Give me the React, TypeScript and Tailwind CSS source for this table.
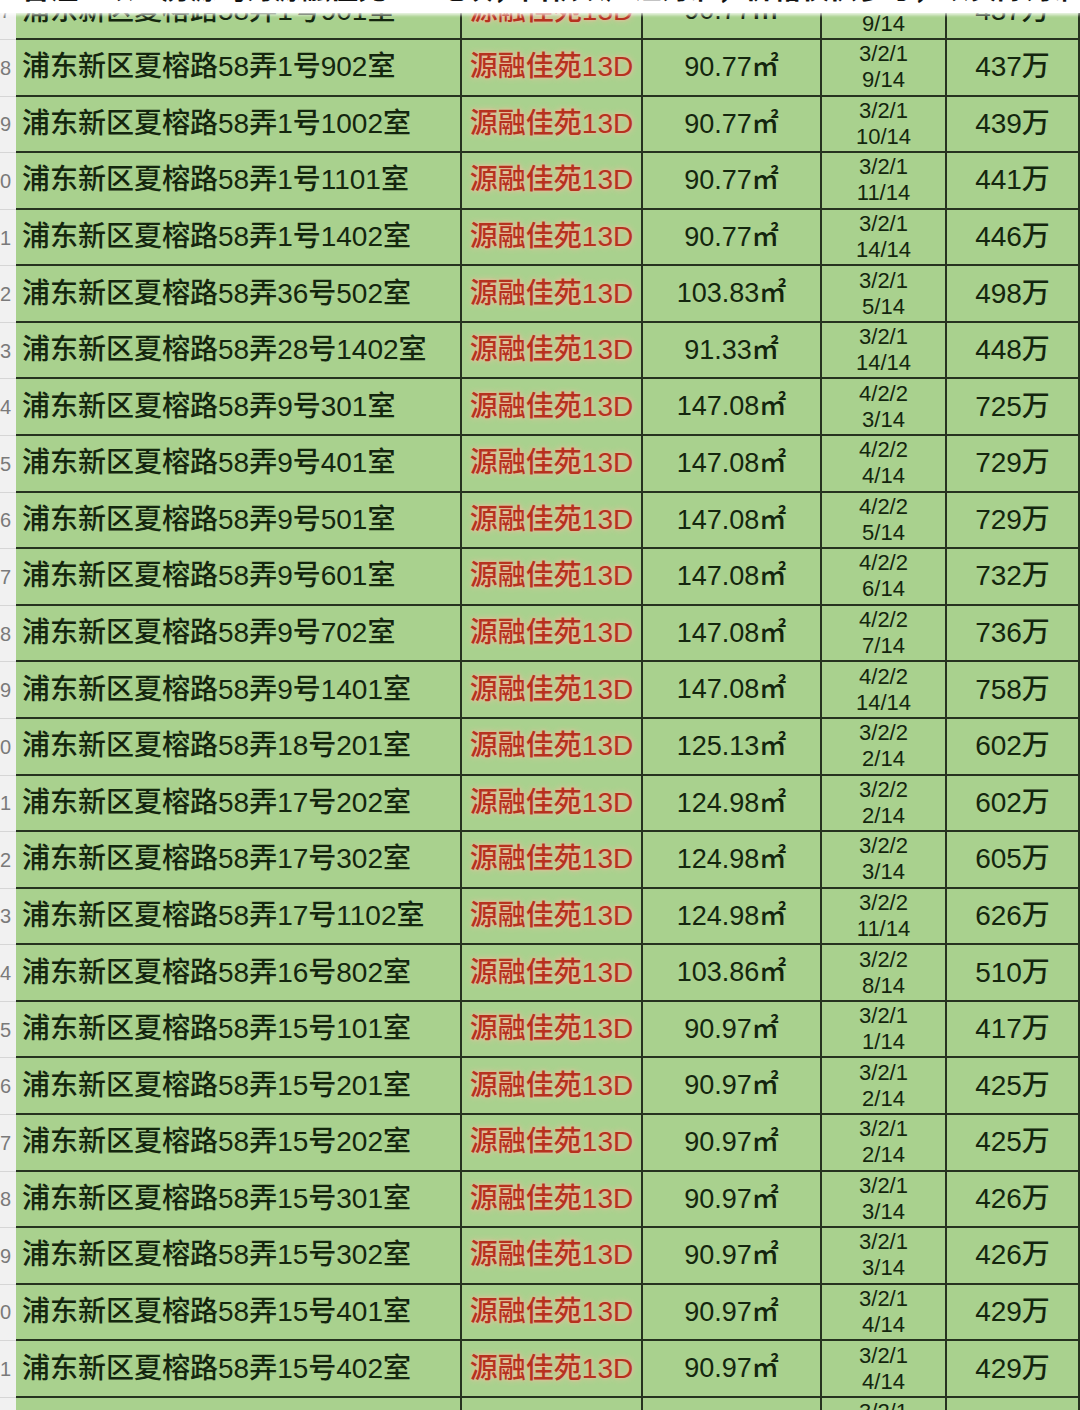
import React from "react";

type Row = {
  no: number;
  addr: string;
  area: string;
  layout: string;
  floor: string;
  price: string;
};

const rows: Row[] = [
  { no: 17, addr: "浦东新区夏榕路58弄1号901室", area: "90.77", layout: "3/2/1", floor: "9/14", price: "437万" },
  { no: 18, addr: "浦东新区夏榕路58弄1号902室", area: "90.77", layout: "3/2/1", floor: "9/14", price: "437万" },
  { no: 19, addr: "浦东新区夏榕路58弄1号1002室", area: "90.77", layout: "3/2/1", floor: "10/14", price: "439万" },
  { no: 20, addr: "浦东新区夏榕路58弄1号1101室", area: "90.77", layout: "3/2/1", floor: "11/14", price: "441万" },
  { no: 21, addr: "浦东新区夏榕路58弄1号1402室", area: "90.77", layout: "3/2/1", floor: "14/14", price: "446万" },
  { no: 22, addr: "浦东新区夏榕路58弄36号502室", area: "103.83", layout: "3/2/1", floor: "5/14", price: "498万" },
  { no: 23, addr: "浦东新区夏榕路58弄28号1402室", area: "91.33", layout: "3/2/1", floor: "14/14", price: "448万" },
  { no: 24, addr: "浦东新区夏榕路58弄9号301室", area: "147.08", layout: "4/2/2", floor: "3/14", price: "725万" },
  { no: 25, addr: "浦东新区夏榕路58弄9号401室", area: "147.08", layout: "4/2/2", floor: "4/14", price: "729万" },
  { no: 26, addr: "浦东新区夏榕路58弄9号501室", area: "147.08", layout: "4/2/2", floor: "5/14", price: "729万" },
  { no: 27, addr: "浦东新区夏榕路58弄9号601室", area: "147.08", layout: "4/2/2", floor: "6/14", price: "732万" },
  { no: 28, addr: "浦东新区夏榕路58弄9号702室", area: "147.08", layout: "4/2/2", floor: "7/14", price: "736万" },
  { no: 29, addr: "浦东新区夏榕路58弄9号1401室", area: "147.08", layout: "4/2/2", floor: "14/14", price: "758万" },
  { no: 30, addr: "浦东新区夏榕路58弄18号201室", area: "125.13", layout: "3/2/2", floor: "2/14", price: "602万" },
  { no: 31, addr: "浦东新区夏榕路58弄17号202室", area: "124.98", layout: "3/2/2", floor: "2/14", price: "602万" },
  { no: 32, addr: "浦东新区夏榕路58弄17号302室", area: "124.98", layout: "3/2/2", floor: "3/14", price: "605万" },
  { no: 33, addr: "浦东新区夏榕路58弄17号1102室", area: "124.98", layout: "3/2/2", floor: "11/14", price: "626万" },
  { no: 34, addr: "浦东新区夏榕路58弄16号802室", area: "103.86", layout: "3/2/2", floor: "8/14", price: "510万" },
  { no: 35, addr: "浦东新区夏榕路58弄15号101室", area: "90.97", layout: "3/2/1", floor: "1/14", price: "417万" },
  { no: 36, addr: "浦东新区夏榕路58弄15号201室", area: "90.97", layout: "3/2/1", floor: "2/14", price: "425万" },
  { no: 37, addr: "浦东新区夏榕路58弄15号202室", area: "90.97", layout: "3/2/1", floor: "2/14", price: "425万" },
  { no: 38, addr: "浦东新区夏榕路58弄15号301室", area: "90.97", layout: "3/2/1", floor: "3/14", price: "426万" },
  { no: 39, addr: "浦东新区夏榕路58弄15号302室", area: "90.97", layout: "3/2/1", floor: "3/14", price: "426万" },
  { no: 40, addr: "浦东新区夏榕路58弄15号401室", area: "90.97", layout: "3/2/1", floor: "4/14", price: "429万" },
  { no: 41, addr: "浦东新区夏榕路58弄15号402室", area: "90.97", layout: "3/2/1", floor: "4/14", price: "429万" },
];

const cell = "flex items-center border-b-2 border-r-2 border-[#26331f] bg-[#a9d18e]";
const cols = "grid h-[56.58px] grid-cols-[16px_446px_181px_179px_125px_133px]";

function SheetRow({ r }: { r: Row }) {
  return (
    <div className={cols}>
      <div className="flex items-center justify-end overflow-hidden border-b border-[#d6d6d6] bg-[#f1f1f1] pr-[5px] text-[20px] text-[#7a7a7a]">
        <span className="shrink-0">{r.no % 10}</span>
      </div>
      <div className={`${cell} pl-[6px] text-[28px] font-medium whitespace-nowrap`}>{r.addr}</div>
      <div className={`${cell} justify-center text-[28px] font-medium text-[#b6321f] [text-shadow:0_0_3px_#f4b396,0_0_6px_#f1c3a2]`}>
        源融佳苑13D
      </div>
      <div className={`${cell} justify-center text-[27px] font-medium`}>
        {r.area}㎡
      </div>
      <div className={`${cell} flex-col justify-center text-[22px] leading-[26px]`}>
        <span>{r.layout}</span>
        <span>{r.floor}</span>
      </div>
      <div className={`${cell} justify-center border-r-0 text-[28px] font-medium`}>{r.price}</div>
    </div>
  );
}

export default function App() {
  return (
    <div
      className="relative h-[1410px] w-[1080px] overflow-hidden bg-white text-[#14260e]"
      style={{ fontFamily: '"Liberation Sans", "Noto Sans CJK SC", sans-serif' }}
    >
      <div className="mt-[-16.6px]">
        {rows.map((r) => (
          <SheetRow key={r.no} r={r} />
        ))}
        {/* next row, only its top edge is on screen */}
        <div className={cols}>
          <div className="border-b border-[#d6d6d6] bg-[#f1f1f1]" />
          <div className={cell} />
          <div className={cell} />
          <div className={cell} />
          <div className={`${cell} flex-col justify-center text-[22px] leading-[26px]`}>
            <span>3/2/1</span>
            <span>5/14</span>
          </div>
          <div className={`${cell} border-r-0`} />
        </div>
      </div>
      {/* frozen header strip, mostly scrolled off */}
      <div className="absolute left-0 right-0 top-0 h-[13px] overflow-hidden bg-white shadow-[0_2px_3px_rgba(255,255,255,0.8)]">
        <div className="mt-[-31px] pl-[22px] text-[28px] font-semibold whitespace-nowrap text-[#111]">
          备注：以上房源均为源融佳苑13D地块，面积以产证为准，价格仅供参考，以实际为准。
        </div>
      </div>
    </div>
  );
}
